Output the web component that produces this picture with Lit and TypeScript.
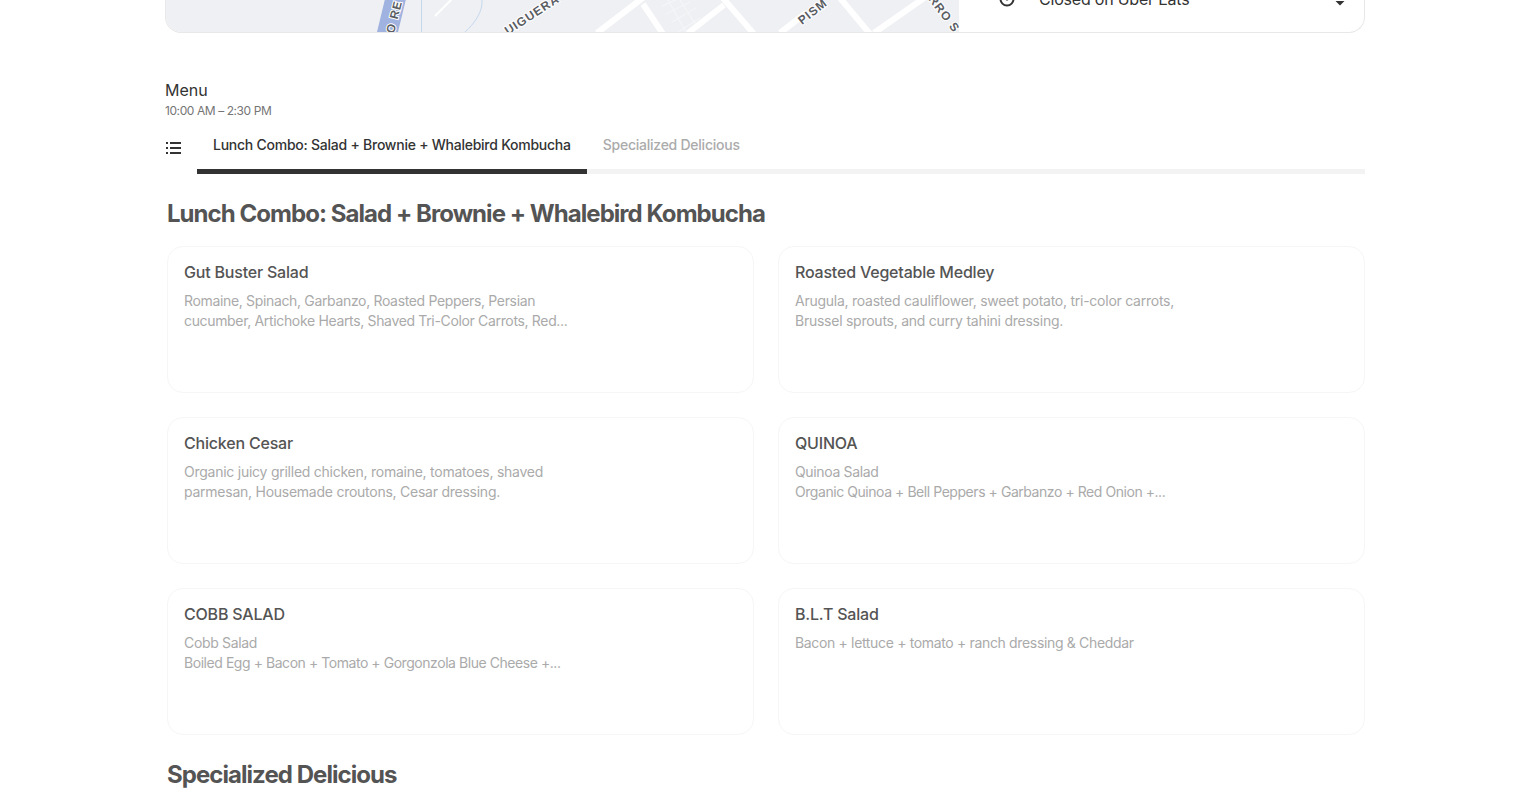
import { css, html, LitElement } from 'lit';
import { customElement } from 'lit/decorators.js';

const items = [
  { title: 'Gut Buster Salad', lines: ['Romaine, Spinach, Garbanzo, Roasted Peppers, Persian', 'cucumber, Artichoke Hearts, Shaved Tri-Color Carrots, Red...'] },
  { title: 'Roasted Vegetable Medley', loose: true, lines: ['Arugula, roasted cauliflower, sweet potato, tri-color carrots,', 'Brussel sprouts, and curry tahini dressing.'] },
  { title: 'Chicken Cesar', loose: true, lines: ['Organic juicy grilled chicken, romaine, tomatoes, shaved', 'parmesan, Housemade croutons, Cesar dressing.'] },
  { title: 'QUINOA', lines: ['Quinoa Salad', 'Organic Quinoa + Bell Peppers + Garbanzo + Red Onion +...'] },
  { title: 'COBB SALAD', lines: ['Cobb Salad', 'Boiled Egg + Bacon + Tomato + Gorgonzola Blue Cheese +...'] },
  { title: 'B.L.T Salad', lines: ['Bacon + lettuce + tomato + ranch dressing & Cheddar'] },
];

@customElement('app-root')
export class AppRoot extends LitElement {
  static get styles() {
    return css`
      :host {
        display: block;
        height: 803px;
        overflow: hidden;
        background: #fff;
        font-family: 'Inter', 'Liberation Sans', sans-serif;
        color: #333;
      }
      .page {
        width: 1200px;
        margin-left: 165px;
      }
      .top {
        display: flex;
        height: 33px;
        box-sizing: border-box;
        border: 1px solid #e8e8e8;
        border-top: 0;
        border-radius: 0 0 16px 16px;
        overflow: hidden;
      }
      .map {
        width: 793px;
        flex: none;
        display: block;
      }
      .status {
        flex: 1;
        display: flex;
        align-items: flex-start;
        gap: 24px;
        padding: 0 18px 0 40px;
        margin-top: -13px;
        font-size: 16px;
        line-height: 24px;
        letter-spacing: -0.21px;
        color: #333;
        height: 24px;
      }
      .status span { flex: 1; }
      .status .clock { flex: none; margin-top: 4px; }
      .status .chevron { flex: none; margin-top: 9px; }
      .head {
        margin-top: 45px;
      }
      .head h2 {
        margin: 0;
        font-size: 16px;
        font-weight: 400;
        line-height: 24px;
        color: #333;
      }
      .head p {
        margin: 1px 0 0;
        font-size: 12px;
        line-height: 16px;
        color: #757575;
        letter-spacing: -0.42px;
      }
      .tabs {
        display: flex;
        margin-top: 11px;
      }
      .tabs svg {
        flex: none;
        width: 16px;
        height: 14px;
        margin: 10px 16px 0 0;
      }
      .tab {
        height: 44px;
        box-sizing: border-box;
        padding: 5px 16px 0;
        font-size: 14px;
        font-weight: 500;
        line-height: 20px;
        letter-spacing: -0.245px;
        border-bottom: 5px solid #f3f3f3;
        color: #ababab;
        white-space: nowrap;
      }
      .tab.active {
        color: #333;
        border-bottom-color: #333;
      }
      .tab.rest { flex: 1; padding: 0; }
      .section {
        margin: 24px 0 0 2px;
        font-size: 24px;
        font-weight: 700;
        line-height: 32px;
        color: #545454;
        letter-spacing: -0.95px;
      }
      .grid {
        display: grid;
        grid-template-columns: 1fr 1fr;
        gap: 24px;
        margin: 16px 0 0 2px;
      }
      .card {
        height: 147px;
        box-sizing: border-box;
        border: 1px solid #f6f6f6;
        border-radius: 16px;
        padding: 13px 16px;
      }
      .card h3 {
        margin: 0 0 7px;
        font-size: 16px;
        font-weight: 500;
        line-height: 24px;
        letter-spacing: -0.2px;
        color: #545454;
      }
      .card div {
        font-size: 14px;
        line-height: 20px;
        letter-spacing: -0.34px;
        color: #aaa;
        white-space: nowrap;
      }
      .card.loose div { letter-spacing: -0.25px; }
      .card div.tight { letter-spacing: -0.445px; }
    `;
  }

  render() {
    return html`
      <div class="page">
        <div class="top">
          <svg class="map" viewBox="0 0 793 32" width="793" height="32">
            <rect width="793" height="32" fill="#eff0f3" />
            <g stroke="#f6f7f8" fill="none" stroke-width="1">
              <path d="M496 6 L514 -2 M500 14 L524 2 M506 22 L530 8 M512 32 L534 18 M502 0 L520 32 M514 0 L532 28" />
            </g>
            <g stroke="#fff" fill="none">
              <path stroke-width="6" d="M431 33 L478 -3 M477 4 L497 34 M522 33 L558 5 M556 -3 L588 34 M614 33 L640 13 M674 -2 L704 34 M708 33 L758 -2" />
              <path stroke-width="2" d="M269 16 L286 -1" />
            </g>
            <path d="M211 32 L219 -1 L240 -1 L232 32 Z" fill="#9fb2e0" />
            <path d="M255.500 0 V32 M316 0 C317 12 308 24 299 32" stroke="#c5d8ee" fill="none" />
            <g font-family="'Liberation Sans', sans-serif" font-size="12" font-weight="700" fill="#5a5d63" letter-spacing="1" stroke="#fff" stroke-width="2" paint-order="stroke">
              <text transform="translate(228 34) rotate(-76)">O RE</text>
              <text transform="translate(342 35) rotate(-33)">UIGUERA</text>
              <text transform="translate(636 25) rotate(-38)">PISM</text>
              <text transform="translate(762 -1) rotate(53)">RRO S</text>
            </g>
          </svg>
          <div class="status">
            <svg class="clock" width="16" height="16" viewBox="0 0 16 16" fill="none" stroke="#333" stroke-width="2">
              <circle cx="8" cy="8" r="6.500" />
              <circle cx="8" cy="8" r="1.500" fill="#333" stroke="none" />
            </svg>
            <span>Closed on Uber Eats</span>
            <svg class="chevron" width="12" height="12" viewBox="0 0 12 12"><path d="M1.500 5 L6 9.500 L10.500 5 Z" fill="#333" /></svg>
          </div>
        </div>

        <div class="head">
          <h2>Menu</h2>
          <p>10:00 AM – 2:30 PM</p>
        </div>

        <div class="tabs">
          <svg viewBox="0 0 16 14" fill="#333">
            <rect x="1" y="2" width="2" height="2" />
            <rect x="5" y="2" width="11" height="2" />
            <rect x="1" y="7" width="2" height="2" />
            <rect x="5" y="7" width="11" height="2" />
            <rect x="1" y="12" width="2" height="2" />
            <rect x="5" y="12" width="11" height="2" />
          </svg>
          <div class="tab active">Lunch Combo: Salad + Brownie + Whalebird Kombucha</div>
          <div class="tab">Specialized Delicious</div>
          <div class="tab rest"></div>
        </div>

        <div class="section">Lunch Combo: Salad + Brownie + Whalebird Kombucha</div>
        <div class="grid">
          ${items.map(
            (item) => html`
              <div class="card ${item.loose ? 'loose' : ''}">
                <h3>${item.title}</h3>
                ${item.lines.map((line) => html`<div class="${line.endsWith('+...') ? 'tight' : ''}">${line}</div>`)}
              </div>
            `
          )}
        </div>
        <div class="section">Specialized Delicious</div>
      </div>
    `;
  }
}
